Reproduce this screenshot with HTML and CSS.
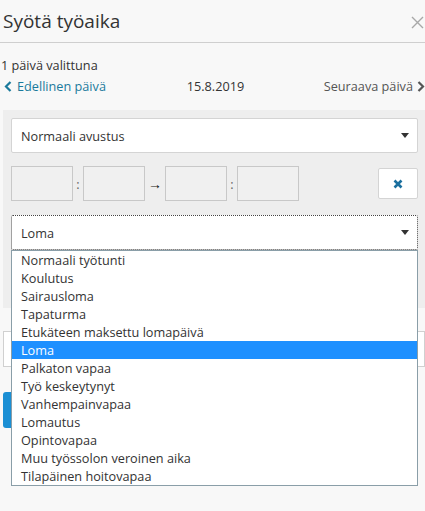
FILE: index.html
```html
<!DOCTYPE html>
<html lang="fi">
<head>
    <meta charset="UTF-8">
    <meta name="viewport" content="width=device-width, initial-scale=1.0">
    <title>Syötä työaika</title>
    <link rel="stylesheet" href="styles.css">
</head>
<body>
    <div class="modal">
        <div class="header">
            <h2>Syötä työaika</h2>
            <span class="close">
                <svg width="13" height="13" viewBox="0 0 13 13"><path d="M1 1L12 12M12 1L1 12" stroke="#a8a8a8" stroke-width="1.4"/></svg>
            </span>
        </div>
        <div class="info">
            <div class="selected">1 päivä valittuna</div>
            <div class="nav">
                <a class="prev">
                    <svg width="8" height="11" viewBox="0 0 8 11"><path d="M6.5 1L2 5.5L6.5 10" fill="none" stroke="#1a7a9c" stroke-width="2.2"/></svg>
                    Edellinen päivä
                </a>
                <span class="date">15.8.2019</span>
                <a class="next">
                    Seuraava päivä
                    <svg width="8" height="11" viewBox="0 0 8 11"><path d="M1.5 1L6 5.5L1.5 10" fill="none" stroke="#555" stroke-width="2.2"/></svg>
                </a>
            </div>
        </div>
        <div class="panel">
            <div class="select">Normaali avustus<span class="caret"></span></div>
            <div class="times">
                <span class="time"></span><span class="sep">:</span>
                <span class="time"></span><span class="arrow">&rarr;</span>
                <span class="time"></span><span class="sep">:</span>
                <span class="time"></span>
                <button class="remove">
                    <svg width="10" height="10" viewBox="0 0 10 10"><path d="M1.5 1.5L8.5 8.5M8.5 1.5L1.5 8.5" stroke="#1a6f9e" stroke-width="2.6"/></svg>
                </button>
            </div>
            <div class="select focused">Loma<span class="caret"></span></div>
        </div>
        <div class="comment"></div>
        <button class="save"></button>

        <ul class="options">
            <li>Normaali työtunti</li>
            <li>Koulutus</li>
            <li>Sairausloma</li>
            <li>Tapaturma</li>
            <li>Etukäteen maksettu lomapäivä</li>
            <li class="active">Loma</li>
            <li>Palkaton vapaa</li>
            <li>Työ keskeytynyt</li>
            <li>Vanhempainvapaa</li>
            <li>Lomautus</li>
            <li>Opintovapaa</li>
            <li>Muu työssolon veroinen aika</li>
            <li>Tilapäinen hoitovapaa</li>
        </ul>
    </div>
</body>
</html>
```

FILE: styles.css
```css
html, body {
    margin: 0;
    padding: 0;
    background-color: #f8f8f8;
    color: #333;
    font-family: "Open Sans", Arial, sans-serif;
    font-size: 12.7px;
}
.modal {
    position: relative;
    height: 511px;
    overflow: hidden;
}
.header {
    height: 43px;
    border-bottom: 1px solid #cfcfcf;
    display: flex;
    align-items: center;
    justify-content: space-between;
    padding: 0 1px 0 3px;
    box-sizing: border-box;
}
h2 {
    margin: 0;
    font-size: 19px;
    font-weight: normal;
    color: #333;
}
.close {
    display: flex;
    padding-top: 2px;
}
.info {
    padding: 13px 0 0 1px;
}
.selected {
    line-height: 18px;
}
.nav {
    display: flex;
    align-items: center;
    justify-content: space-between;
    line-height: 20px;
    margin-top: 2px;
}
.prev {
    color: #1a7a9c;
    display: flex;
    align-items: center;
    gap: 5px;
    width: 150px;
    padding-left: 3px;
}
.date {
    margin-left: 2px;
}
.next {
    color: #555;
    display: flex;
    align-items: center;
    justify-content: flex-end;
    gap: 4px;
    width: 150px;
}
.panel {
    margin: 14px 0 0 3px;
    background: #eeeeee;
    padding: 8px 7px 58px 8px;
}
.select {
    height: 35px;
    background: #fff;
    border: 1px solid #d4d4d4;
    border-radius: 2px;
    box-sizing: border-box;
    display: flex;
    align-items: center;
    justify-content: space-between;
    padding: 0 8px 0 9px;
}
.select.focused {
    border: 1px dotted #444;
}
.caret {
    width: 0;
    height: 0;
    border-left: 4px solid transparent;
    border-right: 4px solid transparent;
    border-top: 5px solid #333;
}
.times {
    display: flex;
    align-items: center;
    margin: 13px 0 14px;
}
.time {
    width: 62px;
    height: 35px;
    box-sizing: border-box;
    border: 1px solid #c8c8c8;
    background: #f0f0f0;
}
.sep {
    width: 10px;
    text-align: center;
    color: #666;
}
.arrow {
    width: 20px;
    text-align: center;
    font-size: 14px;
    color: #111;
}
.remove {
    margin-left: auto;
    width: 40px;
    height: 31px;
    background: #fff;
    border: 1px solid #d4d4d4;
    border-radius: 2px;
    display: flex;
    align-items: center;
    justify-content: center;
    padding: 0;
}
.comment {
    margin: 23px 0 0 3px;
    height: 36px;
    box-sizing: border-box;
    background: #fff;
    border: 1px solid #d0d0d0;
}
.save {
    display: block;
    margin: 25px 0 0 3px;
    width: 100px;
    height: 36px;
    border: 0;
    border-radius: 3px;
    background: #1b8fd4;
}
.options {
    position: absolute;
    top: 250px;
    left: 11px;
    width: 407px;
    margin: 0;
    padding: 0;
    list-style: none;
    background: #fff;
    border: 1px solid #8a9ea8;
    box-sizing: border-box;
}
.options li {
    height: 18px;
    line-height: 18px;
    padding-left: 9px;
}
.options li.active {
    background: #1e90ff;
    color: #fff;
}
```
